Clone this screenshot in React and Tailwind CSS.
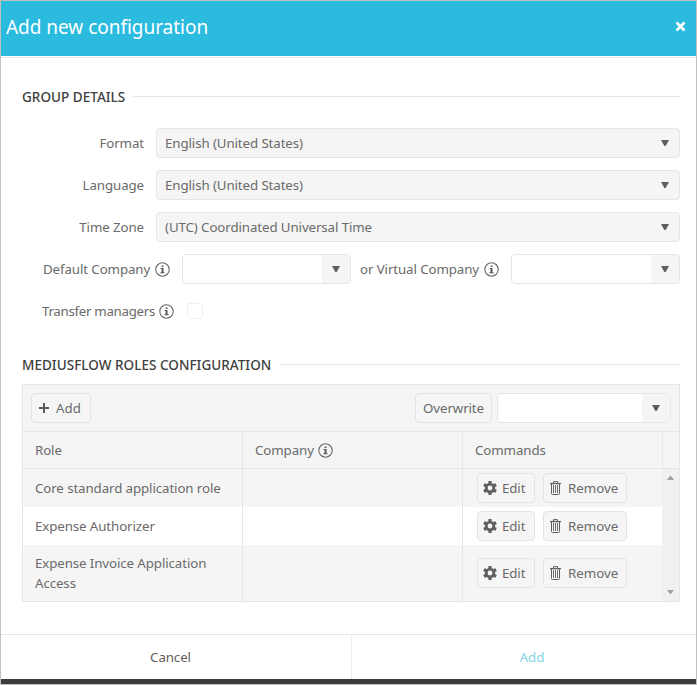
import React from "react";

function Info() {
  return (
    <svg className="h-[15px] w-[15px] shrink-0" viewBox="0 0 15 15" fill="none">
      <circle cx="7.5" cy="7.5" r="6.7" stroke="#6a6a6a" strokeWidth="1.1" />
      <path d="M6.7 3.4h1.8v1.5H6.7zM5.6 6h2.9v4.2h1.1v1H5.4v-1h1.2V7h-1z" fill="#555" />
    </svg>
  );
}

function Caret() {
  return (
    <svg className="h-[6px] w-[8px]" viewBox="0 0 8 6">
      <path d="M0 0h8L4.6 6H3.4z" fill="#5e5e5e" />
    </svg>
  );
}

function Gear() {
  return (
    <svg className="h-[14px] w-[14px] shrink-0" viewBox="0 0 14 14">
      <g fill="#606060">
        <rect x="5.4" y="0" width="3.2" height="14" rx="0.5" />
        <rect x="5.4" y="0" width="3.2" height="14" rx="0.5" transform="rotate(60 7 7)" />
        <rect x="5.4" y="0" width="3.2" height="14" rx="0.5" transform="rotate(120 7 7)" />
        <circle cx="7" cy="7" r="5.2" />
      </g>
      <circle cx="7" cy="7" r="2.4" fill="#f5f5f5" />
    </svg>
  );
}

function Trash() {
  return (
    <svg className="h-[14px] w-[11px] shrink-0" viewBox="0 0 11 14" fill="none" stroke="#606060">
      <path d="M3.5 2V.6h4V2" />
      <path d="M0 2.6h11" strokeWidth="1.3" />
      <path d="M1.5 3v9.5q0 1 1 1h6q1 0 1-1V3" />
      <path d="M3.5 4v8M5.5 4v8M7.5 4v8" strokeWidth="0.9" />
    </svg>
  );
}

function Section({ title, className }) {
  return (
    <div className={"flex h-5 items-center " + className}>
      <h2 className="shrink-0 font-medium tracking-[0.03px] whitespace-nowrap text-[#404040] text-[13.5px]">{title}</h2>
      <div className="mb-px h-px flex-1 bg-[#e6e6e6]" />
    </div>
  );
}

function SelectRow({ label, value }) {
  return (
    <div className="flex h-[30px] items-center">
      <label className="w-[122px] text-right">{label}</label>
      <div className="ml-3 flex h-[30px] flex-1 items-center justify-between rounded border border-[#e6e6e6] bg-[#f5f5f5] pr-[10px] pl-2">
        <span>{value}</span>
        <Caret />
      </div>
    </div>
  );
}

function Combo({ className }) {
  return (
    <div className={"flex h-[30px] overflow-hidden rounded border border-[#e6e6e6] bg-white " + className}>
      <div className="flex-1" />
      <div className="flex w-[28px] items-center justify-center bg-[#f5f5f5]">
        <Caret />
      </div>
    </div>
  );
}

const button = "flex h-[30px] items-center rounded border border-[#e3e3e3] bg-[#f5f5f5] whitespace-nowrap ";

function Row({ role, className }) {
  return (
    <div className={"flex " + className}>
      <div className="flex w-[220px] items-center border-r border-[#e6e6e6] pl-3 leading-5">
        <div className="w-[190px]">{role}</div>
      </div>
      <div className="w-[220px] border-r border-[#e6e6e6]" />
      <div className="flex flex-1 items-center gap-2 pl-[14px]">
        <button className={button + "w-[58px] gap-[5px] pl-[5px]"}>
          <Gear />
          Edit
        </button>
        <button className={button + "w-[84px] gap-[7px] pl-[6px] tracking-normal"}>
          <Trash />
          Remove
        </button>
      </div>
    </div>
  );
}

export default function App() {
  return (
    <div className="flex h-[685px] w-[697px] flex-col border border-[#c0c0c0] bg-white font-['Noto_Sans',sans-serif] text-[13.3px] leading-5 tracking-[-0.1px] text-[#6a6a6a]">
      <header className="flex h-[55px] shrink-0 items-center justify-between bg-[#2abbdf] pr-[10px] pl-[5px] text-white">
        <h1 className="mb-[3px] text-[19px] tracking-[-0.03px] whitespace-nowrap">Add new configuration</h1>
        <svg className="mb-[5px] h-[11px] w-[11px]" viewBox="0 0 11 11">
          <path d="M1.5 1.5l8 8M9.5 1.5l-8 8" stroke="#fff" strokeWidth="2.6" />
        </svg>
      </header>
      <div className="mt-px h-px shrink-0 bg-[#e6e6e6]" />

      <main className="flex h-[576px] shrink-0 flex-col pr-4 pl-[21px]">
        <Section title="GROUP DETAILS" className="mt-[29px] gap-2" />
        <div className="mt-[21px] flex flex-col gap-3">
          <SelectRow label="Format" value="English (United States)" />
          <SelectRow label="Language" value="English (United States)" />
          <SelectRow label="Time Zone" value="(UTC) Coordinated Universal Time" />
          <div className="flex h-[30px] items-center pl-[21px] whitespace-nowrap">
            <div className="flex w-[139px] items-center">
              <span className="w-[112px]">Default Company</span>
              <Info />
            </div>
            <Combo className="w-[169px]" />
            <div className="flex flex-1 items-center pl-[9px]">
              <span className="w-[124px]">or Virtual Company</span>
              <Info />
            </div>
            <Combo className="w-[169px]" />
          </div>
          <div className="flex h-[30px] items-center pl-5 whitespace-nowrap">
            <span className="w-[117px] tracking-[-0.3px]">Transfer managers</span>
            <Info />
            <div className="ml-[13px] h-4 w-4 rounded-[3px] border border-[#efefef]" />
          </div>
        </div>

        <Section title="MEDIUSFLOW ROLES CONFIGURATION" className="mt-[29px] gap-2" />
        <section className="mt-[9px] flex h-[218px] flex-col border border-[#e6e6e6] bg-[#f5f5f5]">
          <div className="flex h-[47px] shrink-0 items-center border-b border-[#e6e6e6] pr-2 pl-2">
            <button className={button + "w-[60px] gap-[7px] pl-[7px] tracking-[0.1px]"}>
              <svg className="h-[10px] w-[10px]" viewBox="0 0 10 10">
                <path d="M5 0v10M0 5h10" stroke="#5a5a5a" strokeWidth="2" />
              </svg>
              Add
            </button>
            <button className={button + "ml-auto w-[77px] justify-center"}>Overwrite</button>
            <Combo className="ml-[5px] w-[174px]" />
          </div>
          <div className="flex h-[37px] shrink-0 border-b border-[#e6e6e6]">
            <div className="flex w-[220px] items-center border-r border-[#e6e6e6] pl-3">Role</div>
            <div className="flex w-[220px] items-center border-r border-[#e6e6e6] pl-3">
              <span className="w-[63px]">Company</span>
              <Info />
            </div>
            <div className="flex w-[200px] items-center border-r border-[#e6e6e6] pl-3">Commands</div>
          </div>
          <div className="flex h-[132px]">
            <div className="flex flex-1 flex-col">
              <Row role="Core standard application role" className="h-[38px]" />
              <Row role="Expense Authorizer" className="h-[38px] bg-white" />
              <Row role="Expense Invoice Application Access" className="h-[56px]" />
            </div>
            <div className="flex w-[17px] flex-col items-center justify-between bg-[#f0f0f0] pt-[7px] pb-[7px]">
              <svg className="h-1 w-[7px]" viewBox="0 0 7 4">
                <path d="M0 4L3 0h1l3 4z" fill="#a0a0a0" />
              </svg>
              <svg className="h-1 w-[7px]" viewBox="0 0 7 4">
                <path d="M0 0l3 4h1l3-4z" fill="#a0a0a0" />
              </svg>
            </div>
          </div>
        </section>
      </main>

      <footer className="flex h-[45px] shrink-0 border-t border-[#e6e6e6]">
        <button className="w-[351px] border-r border-[#ececec] pr-[11px] text-[#606060]">Cancel</button>
        <button className="flex-1 pl-[16px] text-[#85d4ea]">Add</button>
      </footer>
      <div className="flex-1 bg-[#3c3c3c]" />
    </div>
  );
}
